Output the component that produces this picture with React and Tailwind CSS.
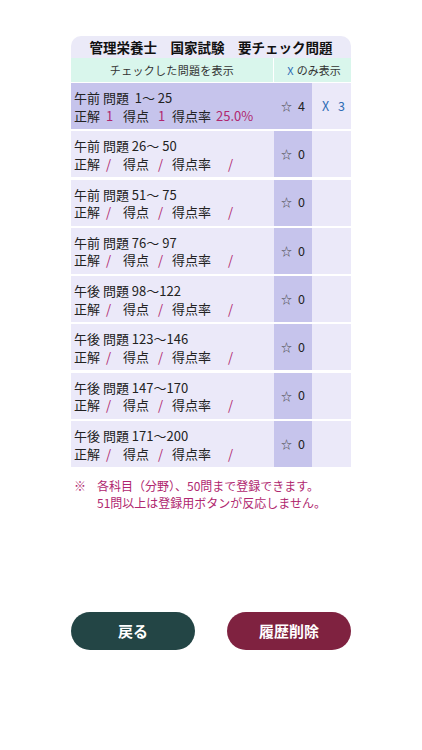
import React from "react";

const rows = [
  { s: "午前 問題  1〜 25", star: 4, x: 3, active: true },
  { s: "午前 問題 26〜 50", star: 0 },
  { s: "午前 問題 51〜 75", star: 0 },
  { s: "午前 問題 76〜 97", star: 0 },
  { s: "午後 問題 98〜122", star: 0 },
  { s: "午後 問題 123〜146", star: 0 },
  { s: "午後 問題 147〜170", star: 0 },
  { s: "午後 問題 171〜200", star: 0 },
];

function Row({ r }) {
  const bg = r.active ? "bg-[#c6c4ec]" : "bg-[#ebe9f9]";
  const pink = "text-[#b0276f]";
  return (
    <div className="flex h-[46px]">
      <div className={`flex-1 ${bg} pl-[3px] pt-[1px] flex flex-col justify-center text-[13px] leading-[17.5px] text-[#222]`}>
        <div className="whitespace-pre">{r.s}</div>
        <div className="flex whitespace-pre">
          <span className="w-[32px]">正解</span>
          <span className={`w-[17px] ${pink}`}>{r.active ? "1" : "/"}</span>
          <span className="w-[35px]">得点</span>
          <span className={`w-[14px] ${pink}`}>{r.active ? "1" : "/"}</span>
          <span className="w-[44px]">得点率</span>
          <span className={`${pink} ${r.active ? "" : "pl-[12px]"}`}>{r.active ? "25.0%" : "/"}</span>
        </div>
      </div>
      <div className="w-[38px] bg-[#c6c4ec] flex items-center justify-center gap-[6px] text-[12.5px] text-[#222]">
        <span className="text-[11px] text-[#444]">☆</span>
        <span>{r.star}</span>
      </div>
      <div className="w-[39px] bg-[#ebe9f9] flex items-center justify-center text-[12.5px] text-[#2f6db5]">
        {r.x ? (
          <span className="flex gap-[9px] pl-[4px]">
            <span>X</span>
            <span>3</span>
          </span>
        ) : null}
      </div>
    </div>
  );
}

export default function App() {
  return (
    <div
      className="w-[422px] h-[750px] bg-white"
      style={{ fontFamily: '"Noto Sans CJK JP", "Noto Sans", sans-serif' }}
    >
      <div className="pt-[36px] pl-[71px] w-[351px]">
        <div className="bg-[#ebeaf8] rounded-t-[10px] h-[22px] flex items-center justify-center font-bold text-[13.5px] text-[#111] whitespace-pre">
          管理栄養士　国家試験　要チェック問題
        </div>
        <div className="flex h-[24px] bg-[#d9f6ec] text-[11px] text-[#333]">
          <div className="flex-1 flex items-center justify-center border-r border-white tracking-[0.3px]">チェックした問題を表示</div>
          <div className="w-[77px] flex items-center justify-center pl-[3px]">
            <span className="text-[#2f6db5] mr-[3px]">X</span>のみ表示
          </div>
        </div>
        <div className="flex flex-col gap-[2.3px] mt-[1px]">
          {rows.map((r, i) => (
            <Row key={i} r={r} />
          ))}
        </div>
        <div className="mt-[10px] text-[12px] leading-[17px] text-[#b0276f] flex">
          <div className="w-[26px] pl-[3px]">※</div>
          <div>
            <div>各科目（分野）、50問まで登録できます。</div>
            <div>51問以上は登録用ボタンが反応しません。</div>
          </div>
        </div>
      </div>
      <div className="flex justify-between pl-[71px] w-[351px] mt-[101px]">
        <button className="w-[124px] h-[38px] rounded-full bg-[#234545] text-white font-bold text-[15px]">戻る</button>
        <button className="w-[124px] h-[38px] rounded-full bg-[#7f2240] text-white font-bold text-[15px]">履歴削除</button>
      </div>
    </div>
  );
}
